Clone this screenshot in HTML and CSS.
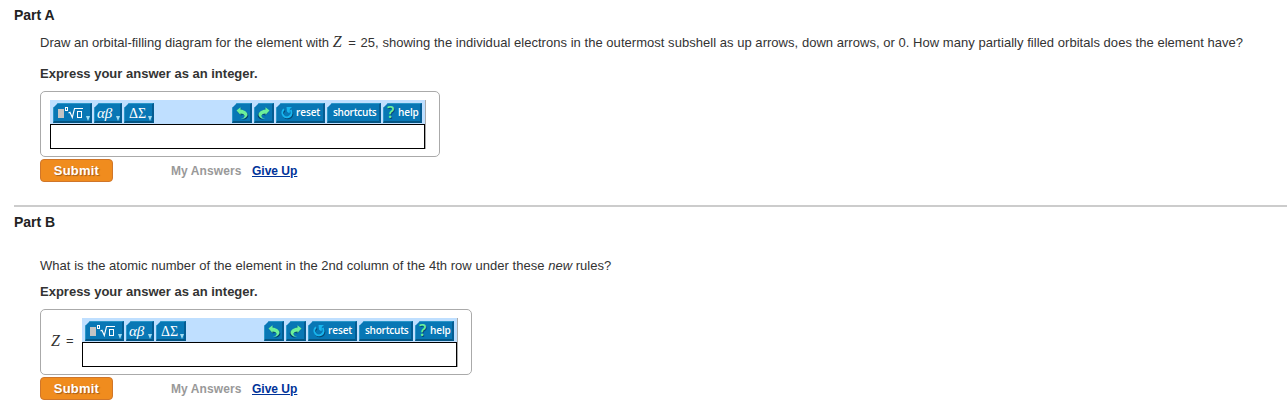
FILE: index.html
```html
<!DOCTYPE html>
<html lang="en">
<head>
<meta charset="utf-8">
<title>Orbital filling</title>
<link rel="stylesheet" href="styles.css">
</head>
<body>
<svg class="defs" width="0" height="0" aria-hidden="true">
  <symbol id="template" viewBox="0 0 39 20">
    <rect x="5" y="6" width="6" height="9" fill="#c4c4c4"/>
    <rect x="12.500" y="4.500" width="2" height="3" fill="none" stroke="#fff"/>
    <path d="M15.500 10l1.500-.8 2.300 5.300L21.500 5.500H30" fill="none" stroke="#fff" stroke-width="1.100"/>
    <rect x="24.500" y="8.500" width="4" height="6" fill="none" stroke="#fff"/>
  </symbol>
  <symbol id="undo" viewBox="0 0 20 20">
    <path d="M4.500 7.500L8.500 4.200V6.500C12.500 7 15.300 9 15.500 11.500c0 2.700-3 4.300-6.800 4.500 3-.9 4.300-2.200 3.800-3.500-.5-1.200-2-1.900-4-2V12z" fill="#033f69" transform="translate(.8 1)"/>
    <path d="M4.500 7.500L8.500 4.200V6.500C12.500 7 15.300 9 15.500 11.500c0 2.700-3 4.300-6.800 4.500 3-.9 4.300-2.200 3.800-3.500-.5-1.200-2-1.900-4-2V12z" fill="#6cf09a"/>
  </symbol>
  <symbol id="reset" viewBox="0 0 14 14">
    <path d="M4 3.200A4.600 4.600 0 1 0 10.700 4" fill="none" stroke="#054a75" stroke-width="2" transform="translate(.8 1)"/>
    <path d="M4 3.200A4.600 4.600 0 1 0 10.700 4" fill="none" stroke="#18b5ee" stroke-width="2"/>
    <path d="M6.500 1H12L9.800 2.900V6.700H8.300L7 5.500z" fill="#18b5ee"/>
  </symbol>
</svg>

<section class="part">
  <h2 class="title">Part A</h2>
  <p class="question"><span class="lead">Draw an orbital-filling diagram for the element with</span> <i class="var">Z</i> <span class="eq">=</span> 25, showing the individual electrons in the outermost subshell as up arrows, down arrows, or 0. How many partially filled orbitals does the element have?</p>
  <p class="instruction">Express your answer as an integer.</p>
  <div class="answer">
    <div class="editor">
      <div class="toolbar">
        <div class="tool template"><svg width="39" height="20"><use href="#template"/></svg><b class="caret"></b></div>
        <div class="tool greek"><i>αβ</i><b class="caret"></b></div>
        <div class="tool sigma"><span>ΔΣ</span><b class="caret"></b></div>
        <div class="tool undo"><svg width="20" height="20"><use href="#undo"/></svg></div>
        <div class="tool redo"><svg class="flip" width="20" height="20"><use href="#undo"/></svg></div>
        <div class="tool reset"><svg width="14" height="14"><use href="#reset"/></svg><span>reset</span></div>
        <div class="tool shortcuts"><span>shortcuts</span></div>
        <div class="tool help"><span class="mark">?</span><span>help</span></div>
      </div>
      <div class="field"></div>
    </div>
  </div>
  <div class="actions"><button class="submit">Submit</button><span class="mine">My Answers</span><a class="give" href="#">Give Up</a></div>
</section>

<section class="part second">
  <h2 class="title">Part B</h2>
  <p class="question">What is the atomic number of the element in the 2nd column of the 4th row under these <em>new</em> rules?</p>
  <p class="instruction">Express your answer as an integer.</p>
  <div class="answer labelled">
    <div class="label"><i class="var">Z</i><span>=</span></div>
    <div class="editor">
      <div class="toolbar">
        <div class="tool template"><svg width="39" height="20"><use href="#template"/></svg><b class="caret"></b></div>
        <div class="tool greek"><i>αβ</i><b class="caret"></b></div>
        <div class="tool sigma"><span>ΔΣ</span><b class="caret"></b></div>
        <div class="tool undo"><svg width="20" height="20"><use href="#undo"/></svg></div>
        <div class="tool redo"><svg class="flip" width="20" height="20"><use href="#undo"/></svg></div>
        <div class="tool reset"><svg width="14" height="14"><use href="#reset"/></svg><span>reset</span></div>
        <div class="tool shortcuts"><span>shortcuts</span></div>
        <div class="tool help"><span class="mark">?</span><span>help</span></div>
      </div>
      <div class="field"></div>
    </div>
  </div>
  <div class="actions"><button class="submit">Submit</button><span class="mine">My Answers</span><a class="give" href="#">Give Up</a></div>
</section>
</body>
</html>
```

FILE: styles.css
```css
* { box-sizing: border-box; }
body { margin: 0; padding-left: 14px; background: #fff; color: #333; font: 13px/20px "Liberation Sans", Arial, sans-serif; overflow: hidden; }
.defs { position: absolute; }
.part { height: 205px; padding-top: 5px; }
.title { margin: 0; font-size: 14px; line-height: 20px; color: #222; }
.question, .instruction { margin: 0 0 0 26px; height: 20px; white-space: nowrap; }
.question { margin-top: 8px; letter-spacing: .035px; }
.lead { letter-spacing: 0; }
.eq { margin: 0 1px 0 3px; }
.instruction { margin-top: 11px; font-weight: bold; }
.var { font: italic 16px/16px "Liberation Serif", serif; }
.answer { display: flex; width: 400px; height: 66px; margin: 7px 0 0 26px; padding: 8px 0 0 9px; border: 1px solid #aaa; border-radius: 5px; }
.editor { width: 376px; height: 49px; border-right: 1px solid #aaa; }
.toolbar { display: flex; gap: 2px; height: 24px; padding: 3px 3px 1px; background: #bfdfff; }
.tool { position: relative; flex: none; height: 20px; display: flex; align-items: center; color: #fff; background: #0877b5; border: solid; border-width: 1px 2px 2px 1px; border-color: #2a96c8 #045c92 #045583 #2a96c8; clip-path: polygon(5px 0, 100% 0, 100% 100%, 0 100%, 0 5px); font: 600 10px/17px "Open Sans", sans-serif; letter-spacing: -.1px; }
.tool svg { flex: none; margin: -1px; }
.template { width: 39px; align-items: flex-start; }
.greek { width: 28px; }
.sigma { width: 30px; }
.greek i, .sigma span { font: 15px/17px "Liberation Serif", serif; padding: 2px 0 0 3px; letter-spacing: 0; }
.greek i { padding-left: 2px; font-style: italic; }
.sigma span { font-size: 14px; padding-left: 4px; }
.caret { position: absolute; right: 0; bottom: 0; width: 4px; height: 5px; background: #9fdcf2; clip-path: polygon(0 0, 100% 0, 50% 100%); }
.undo, .redo { width: 20px; align-items: flex-start; }
.undo { margin-left: 76px; }
.flip { transform: scaleX(-1); }
.reset { width: 49px; }
.reset svg { margin: 1px 0 0 3px; }
.reset span { margin-left: 2px; }
.shortcuts { width: 54px; padding-left: 5px; letter-spacing: -.25px; }
.help { width: 39px; }
.mark { width: 14px; padding-left: 3px; font: 600 16px/17px "Open Sans", sans-serif; color: #6cf09a; text-shadow: 1px 1px #034b77; }
.field { width: 375px; height: 25px; border: 1px solid #000; }
.actions { display: flex; margin: 2px 0 0 26px; height: 23px; line-height: 25px; font-weight: bold; font-size: 12px; letter-spacing: .1px; }
.submit { width: 73px; height: 23px; padding: 0; border: 1px solid #d0762a; border-radius: 4px; background: #f08c1e; color: #fff; font: bold 13px/20px "Liberation Sans", Arial, sans-serif; letter-spacing: .2px; text-shadow: 1px 1px 1px #a05a18; }
.mine { width: 81px; margin-left: 58px; color: #999; }
.give { color: #039; text-decoration: underline; letter-spacing: 0; }
.second { height: 212px; border-top: 2px solid #ccc; padding-top: 5px; }
.second .question { margin-top: 24px; }
.second .instruction { margin-top: 6px; }
.labelled { width: 432px; }
.label { display: flex; width: 32px; padding: 14px 0 0 1px; gap: 6px; line-height: 18px; }
.label .var { line-height: 18px; }
```
